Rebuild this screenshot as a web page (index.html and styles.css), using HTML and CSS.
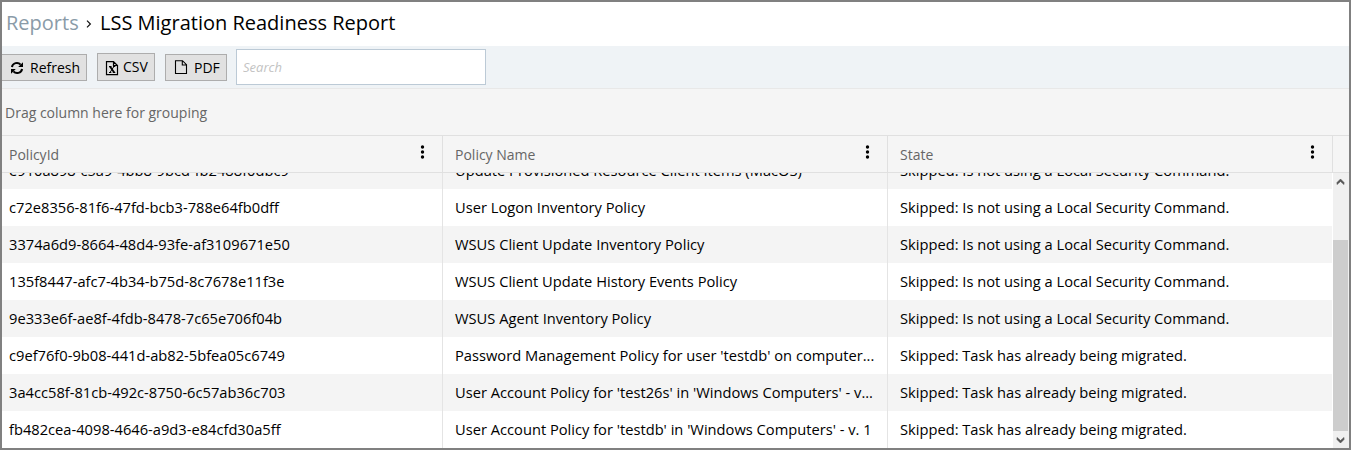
FILE: index.html
```html
<!DOCTYPE html>
<html lang="en">
<head>
<meta charset="utf-8">
<title>LSS Migration Readiness Report</title>
<link rel="stylesheet" href="styles.css">
</head>
<body>
<div class="page">
  <header class="breadcrumb"><a class="crumb">Reports</a><svg class="sep" width="6" height="8" viewBox="0 0 6 8"><path d="M1 .6 4.4 4 1 7.4" fill="none" stroke="#111" stroke-width="1.2"/></svg><h1 class="title">LSS Migration Readiness Report</h1></header>
  <div class="toolbar">
    <button class="btn btn-refresh"><svg width="14" height="14" viewBox="0 0 14 14"><path d="M1.9 6A5 5 0 0 1 10.6 3.7M12.1 8A5 5 0 0 1 3.4 10.3" fill="none" stroke="#000" stroke-width="2"/><path d="M13 1.2V6H8.2zM1 12.8V8h4.800z"/></svg><span>Refresh</span></button>
    <button class="btn btn-csv"><svg width="14" height="15" viewBox="0 0 14 15"><path d="M1.500 .7H8.500L12.500 4.500V13.700H1.500zM8.500 .7V4.500H12.500" fill="none" stroke="#000" stroke-width="1.200"/><path d="M4 5.500h2.500M8 5.500h2.300M4 11.500h2.300M7.800 11.500h2.500M8.900 5.500 5 11.500" stroke="#000" stroke-width="1" fill="none"/><path d="M5 5.500l4.200 6" stroke="#000" stroke-width="1.800"/></svg><span>CSV</span></button>
    <button class="btn btn-pdf"><svg width="14" height="15" viewBox="0 0 14 15"><path d="M1.500 .7H8.500L12.500 4.700V13.500H1.500zM8.300 .7V5H12.500" fill="none" stroke="#000" stroke-width="1.100"/></svg><span>PDF</span></button>
    <input class="search" type="text" placeholder="Search">
  </div>
  <div class="group-panel"><span>Drag column here for grouping</span></div>
  <div class="grid-head">
    <div class="th"><span>PolicyId</span><svg class="dots" width="5" height="14" viewBox="0 0 5 14"><circle cx="2.500" cy="2" r="1.700"/><circle cx="2.500" cy="7" r="1.700"/><circle cx="2.500" cy="12" r="1.700"/></svg></div>
    <div class="th"><span>Policy Name</span><svg class="dots" width="5" height="14" viewBox="0 0 5 14"><circle cx="2.500" cy="2" r="1.700"/><circle cx="2.500" cy="7" r="1.700"/><circle cx="2.500" cy="12" r="1.700"/></svg></div>
    <div class="th"><span>State</span><svg class="dots" width="5" height="14" viewBox="0 0 5 14"><circle cx="2.500" cy="2" r="1.700"/><circle cx="2.500" cy="7" r="1.700"/><circle cx="2.500" cy="12" r="1.700"/></svg></div>
    <div></div>
  </div>
  <div class="grid-body">
    <div class="rows">
      <div class="row alt"><div class="td id"><span>e910a898-c5a9-4bb8-9bcd-fb2488f0dbc9</span></div><div class="td name"><span>Update Provisioned Resource Client Items (MacOS)</span></div><div class="td state"><span>Skipped: Is not using a Local Security Command.</span></div></div>
      <div class="row"><div class="td id"><span>c72e8356-81f6-47fd-bcb3-788e64fb0dff</span></div><div class="td name"><span>User Logon Inventory Policy</span></div><div class="td state"><span>Skipped: Is not using a Local Security Command.</span></div></div>
      <div class="row alt"><div class="td id"><span>3374a6d9-8664-48d4-93fe-af3109671e50</span></div><div class="td name"><span>WSUS Client Update Inventory Policy</span></div><div class="td state"><span>Skipped: Is not using a Local Security Command.</span></div></div>
      <div class="row"><div class="td id"><span>135f8447-afc7-4b34-b75d-8c7678e11f3e</span></div><div class="td name"><span>WSUS Client Update History Events Policy</span></div><div class="td state"><span>Skipped: Is not using a Local Security Command.</span></div></div>
      <div class="row alt"><div class="td id"><span>9e333e6f-ae8f-4fdb-8478-7c65e706f04b</span></div><div class="td name"><span>WSUS Agent Inventory Policy</span></div><div class="td state"><span>Skipped: Is not using a Local Security Command.</span></div></div>
      <div class="row"><div class="td id"><span>c9ef76f0-9b08-441d-ab82-5bfea05c6749</span></div><div class="td name"><span>Password Management Policy for user 'testdb' on computer...</span></div><div class="td state"><span>Skipped: Task has already being migrated.</span></div></div>
      <div class="row alt"><div class="td id"><span>3a4cc58f-81cb-492c-8750-6c57ab36c703</span></div><div class="td name"><span>User Account Policy for 'test26s' in 'Windows Computers' - v...</span></div><div class="td state"><span>Skipped: Task has already being migrated.</span></div></div>
      <div class="row"><div class="td id"><span>fb482cea-4098-4646-a9d3-e84cfd30a5ff</span></div><div class="td name"><span>User Account Policy for 'testdb' in 'Windows Computers' - v. 1</span></div><div class="td state"><span>Skipped: Task has already being migrated.</span></div></div>
    </div>
    <div class="scrollbar">
      <svg width="15" height="17" viewBox="0 0 15 17"><path d="M4 11.500V9.500L7.500 6 11 9.500v2L7.500 8.500z" fill="#555" stroke="#555" stroke-width=".6"/></svg>
      <div class="thumb"></div>
      <svg width="15" height="17" viewBox="0 0 15 17"><path d="M4 6.500v2L7.500 12 11 8.500v-2L7.500 9.500z" fill="#555" stroke="#555" stroke-width=".6"/></svg>
    </div>
  </div>
</div>
</body>
</html>
```
FILE: styles.css
```css
* { box-sizing: border-box; }
body { margin: 0; font: 14px/20px "Open Sans", "Noto Sans", sans-serif; color: #000; }
.page { width: 1351px; height: 450px; border: 2px solid #808080; background: #fff; display: flex; flex-direction: column; overflow: hidden; }
.breadcrumb { height: 44px; flex: none; display: flex; align-items: center; padding: 0 0 3px 4px; font-size: 20px; line-height: 28px; white-space: nowrap; }
.crumb { color: #8a9ba8; width: 80px; }
.sep { margin-right: 8px; margin-top: 3px; }
.title { margin: 0; font-size: 20px; font-weight: 400; line-height: 28px; }
.toolbar { height: 43px; flex: none; display: flex; align-items: flex-start; background: #eff3f6; border-bottom: 1px solid #e8e8e8; }
.btn { display: flex; align-items: center; height: 28px; padding: 0; border: 1px solid #adadad; background: #e1e1e1; font: 14px/20px "Open Sans", "Noto Sans", sans-serif; color: #000; white-space: nowrap; }
.btn svg { flex: none; }
.btn-refresh { width: 85px; height: 27px; margin-top: 8px; border-left: 0; padding-left: 8px; gap: 6px; }
.btn-csv { width: 58px; margin: 7px 0 0 10px; padding-left: 7px; gap: 4px; }
.btn-csv svg { margin-top: 3px; }
.btn-pdf { width: 62px; height: 27px; margin: 8px 0 0 10px; padding-left: 8px; gap: 6px; }
.search { width: 250px; height: 36px; margin: 3px 0 0 9px; padding: 0 6px; border: 1px solid #bccad6; border-radius: 0; background: #fff; font: 13px/20px "Open Sans", "Noto Sans", sans-serif; outline: none; }
.search::placeholder { color: #c3c3c3; font-style: italic; opacity: 1; }
.group-panel { height: 47px; flex: none; display: flex; align-items: center; padding: 2px 0 0 3px; background: #f5f5f5; border-bottom: 1px solid #e0e0e0; color: #666; }
.grid-head { height: 37px; flex: none; display: grid; grid-template-columns: 441px 445px 445px 16px; background: #f5f5f5; border-bottom: 1px solid #e0e0e0; color: #666; }
.th { display: flex; justify-content: space-between; align-items: center; padding: 2px 17px 0 12px; border-right: 1px solid #e0e0e0; }
.th:first-child { padding-left: 7px; }
.dots { margin-top: -6px; fill: #000; }
.grid-body { flex: 1; min-height: 0; display: flex; }
.rows { width: 1331px; height: 275px; display: flex; flex-direction: column; justify-content: flex-end; overflow: hidden; }
.row { height: 37px; flex: none; display: grid; grid-template-columns: 441px 445px 444px; background: #fff; width: 1330px; font-size: 14.68px; }
.row.alt { background: #f4f4f4; }
.td { display: flex; align-items: center; padding: 0 0 1px 12px; border-right: 1px solid #e4e4e4; white-space: nowrap; }
.td.id { padding-left: 7px; }
.td.state { border-right: 0; }
.scrollbar { width: 16px; background: #f0f0f0; display: flex; flex-direction: column; justify-content: space-between; }
.thumb { width: 15px; height: 191px; margin-top: auto; background: #cdcdcd; }
```
